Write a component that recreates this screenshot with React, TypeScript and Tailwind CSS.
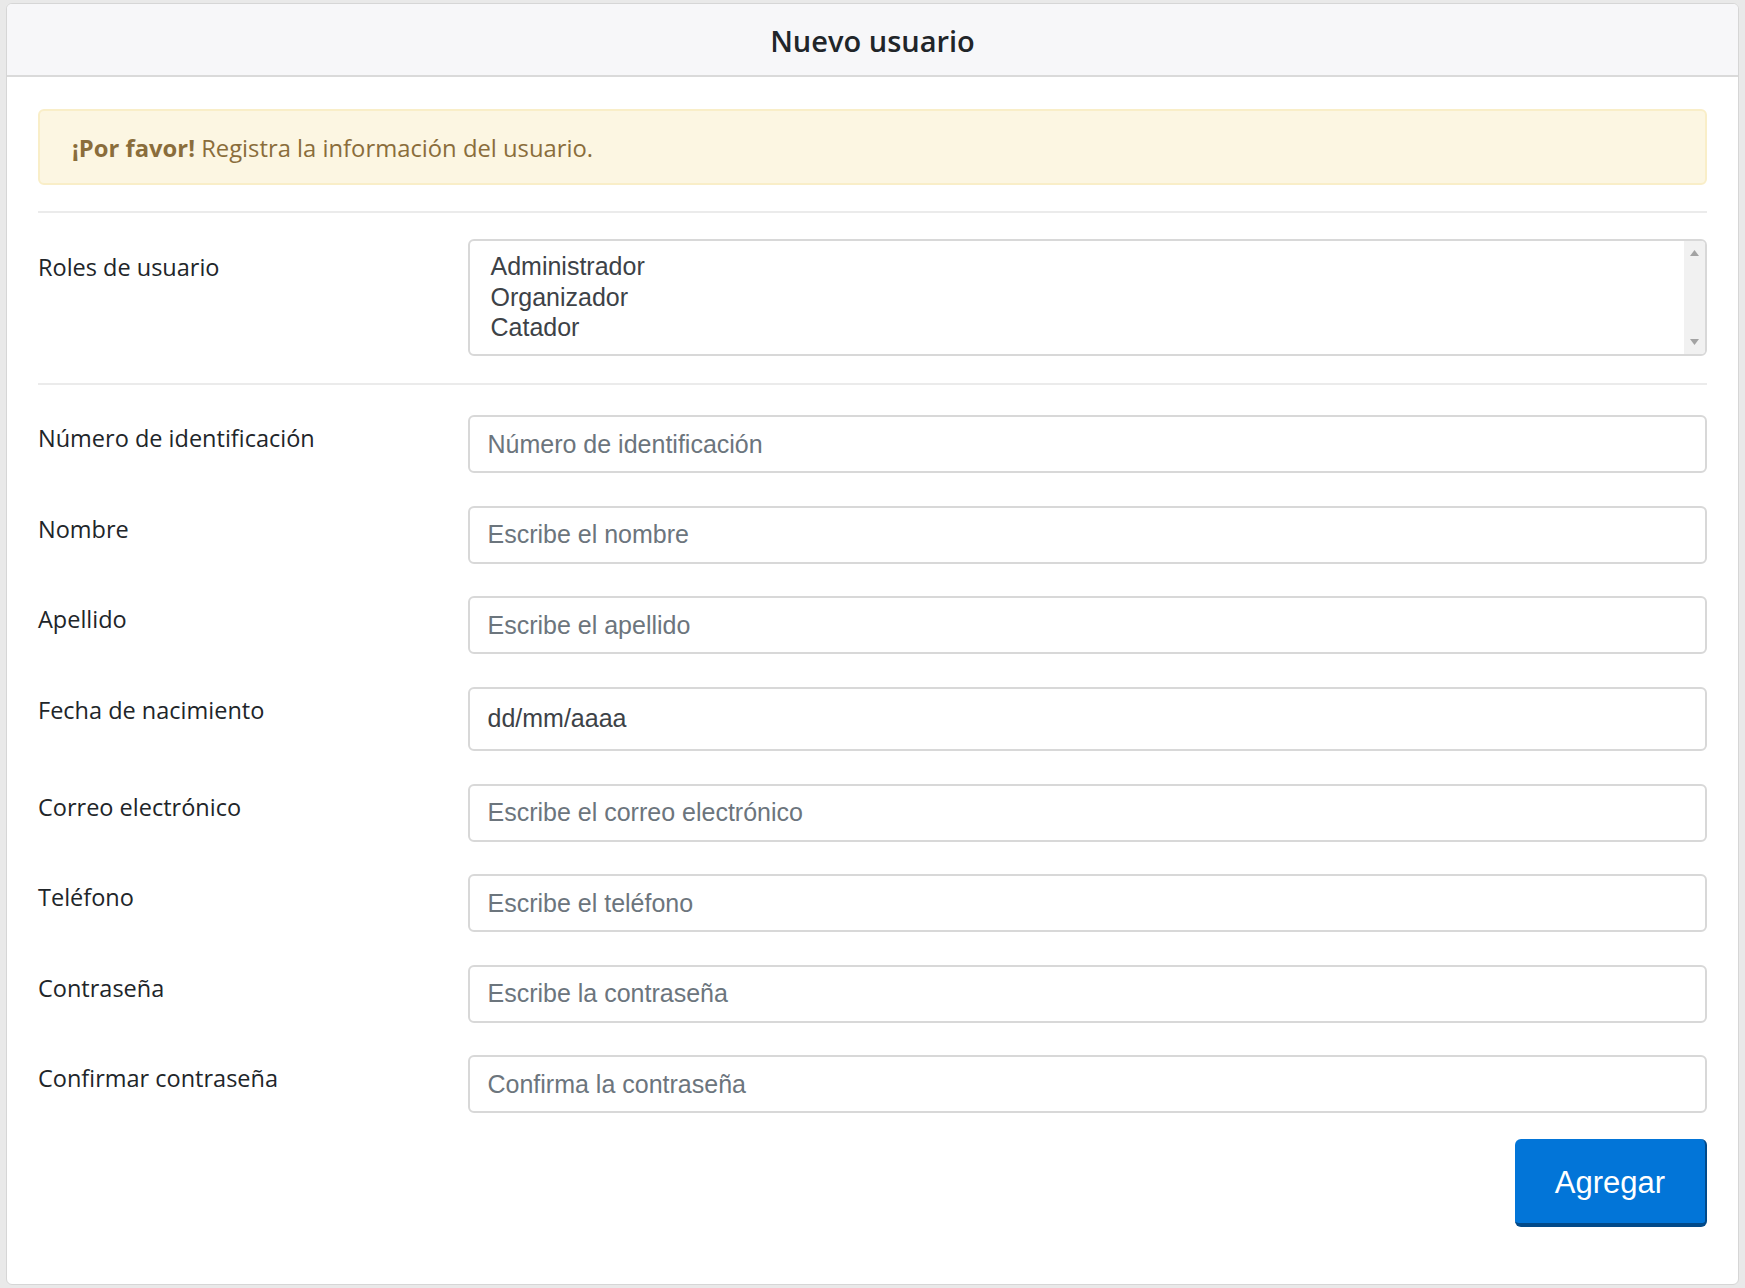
import React from "react";

const segoe = { fontFamily: '"Open Sans", "Noto Sans", sans-serif' };
const arial = { fontFamily: '"Liberation Sans", Arial, sans-serif' };

function Field({ label, placeholder, tall, dark }: { label: string; placeholder: string; tall?: boolean; dark?: boolean }) {
  return (
    <div className="flex">
      <div className="w-[429.5px] shrink-0 pt-[5px] text-[23.5px] leading-[36px] text-[#212529]" style={segoe}>
        {label}
      </div>
      <input
        readOnly
        placeholder={placeholder}
        className={`flex-1 min-w-0 rounded-[6px] border-2 border-[#d8d8d8] bg-white pl-[18px] text-[25px] outline-none ${
          tall ? "h-[64.5px]" : "h-[58px]"
        } ${dark ? "placeholder:text-[#3d4247]" : "placeholder:text-[#6c757d]"}`}
        style={arial}
      />
    </div>
  );
}

export default function App() {
  const fields: { label: string; placeholder: string; tall?: boolean; dark?: boolean }[] = [
    { label: "Número de identificación", placeholder: "Número de identificación" },
    { label: "Nombre", placeholder: "Escribe el nombre" },
    { label: "Apellido", placeholder: "Escribe el apellido" },
    { label: "Fecha de nacimiento", placeholder: "dd/mm/aaaa", tall: true, dark: true },
    { label: "Correo electrónico", placeholder: "Escribe el correo electrónico" },
    { label: "Teléfono", placeholder: "Escribe el teléfono" },
    { label: "Contraseña", placeholder: "Escribe la contraseña" },
    { label: "Confirmar contraseña", placeholder: "Confirma la contraseña" },
  ];

  return (
    <div className="min-h-screen bg-[#e9e9e9] px-[6px] pt-[3px] pb-[3px]">
      <div className="overflow-hidden rounded-[6px] border border-[#d6d6d6] bg-white">
        <div className="flex h-[73px] items-center justify-center border-b-2 border-[#dadada] bg-[#f7f7f9] pt-[3px]">
          <h5 className="text-[29px] font-semibold text-[#212529]" style={segoe}>
            Nuevo usuario
          </h5>
        </div>
        <div className="px-[31px] pt-[32px] pb-[57px]">
          <div
            className="flex h-[76px] items-center rounded-[6px] border-2 border-[#f9eec8] bg-[#fcf6e2] px-[32px] pt-[3px] text-[23.8px] text-[#8a6d3b]"
            style={segoe}
          >
            <span>
              <strong className="font-bold">¡Por favor!</strong> Registra la información del usuario.
            </span>
          </div>
          <div className="mt-[26px] h-[2px] bg-[#ebebeb]" />
          <div className="mt-[26px] flex">
            <div className="w-[429.5px] shrink-0 pt-[10px] text-[23.5px] leading-[36px] text-[#212529]" style={segoe}>
              Roles de usuario
            </div>
            <div className="flex h-[117px] flex-1 overflow-hidden rounded-[6px] border-2 border-[#d8d8d8] bg-white">
              <div className="flex-1 pl-[21px] pt-[10px] text-[25px] leading-[30.5px] text-[#3d4247]" style={arial}>
                <div>Administrador</div>
                <div>Organizador</div>
                <div>Catador</div>
              </div>
              <div className="flex w-[21px] flex-col items-center justify-between bg-[#f1f1f1] py-[9px]">
                <svg width="9" height="6" viewBox="0 0 9 6">
                  <path d="M0 6 L4.5 0 L9 6 Z" fill="#a3a3a3" />
                </svg>
                <svg width="9" height="6" viewBox="0 0 9 6">
                  <path d="M0 0 L4.5 6 L9 0 Z" fill="#a3a3a3" />
                </svg>
              </div>
            </div>
          </div>
          <div className="mt-[27px] h-[2px] bg-[#ebebeb]" />
          <div className="mt-[30px] flex flex-col gap-[32.5px]">
            {fields.map((f) => (
              <Field key={f.label} {...f} />
            ))}
          </div>
          <div className="mt-[25.5px] flex justify-end">
            <button
              className="h-[88px] w-[192px] rounded-[6px] border-r-[2px] border-b-[4px] border-[#024a8a] bg-[#0275d8] pt-[5px] text-[31px] text-white"
              style={arial}
            >
              Agregar
            </button>
          </div>
        </div>
      </div>
    </div>
  );
}
